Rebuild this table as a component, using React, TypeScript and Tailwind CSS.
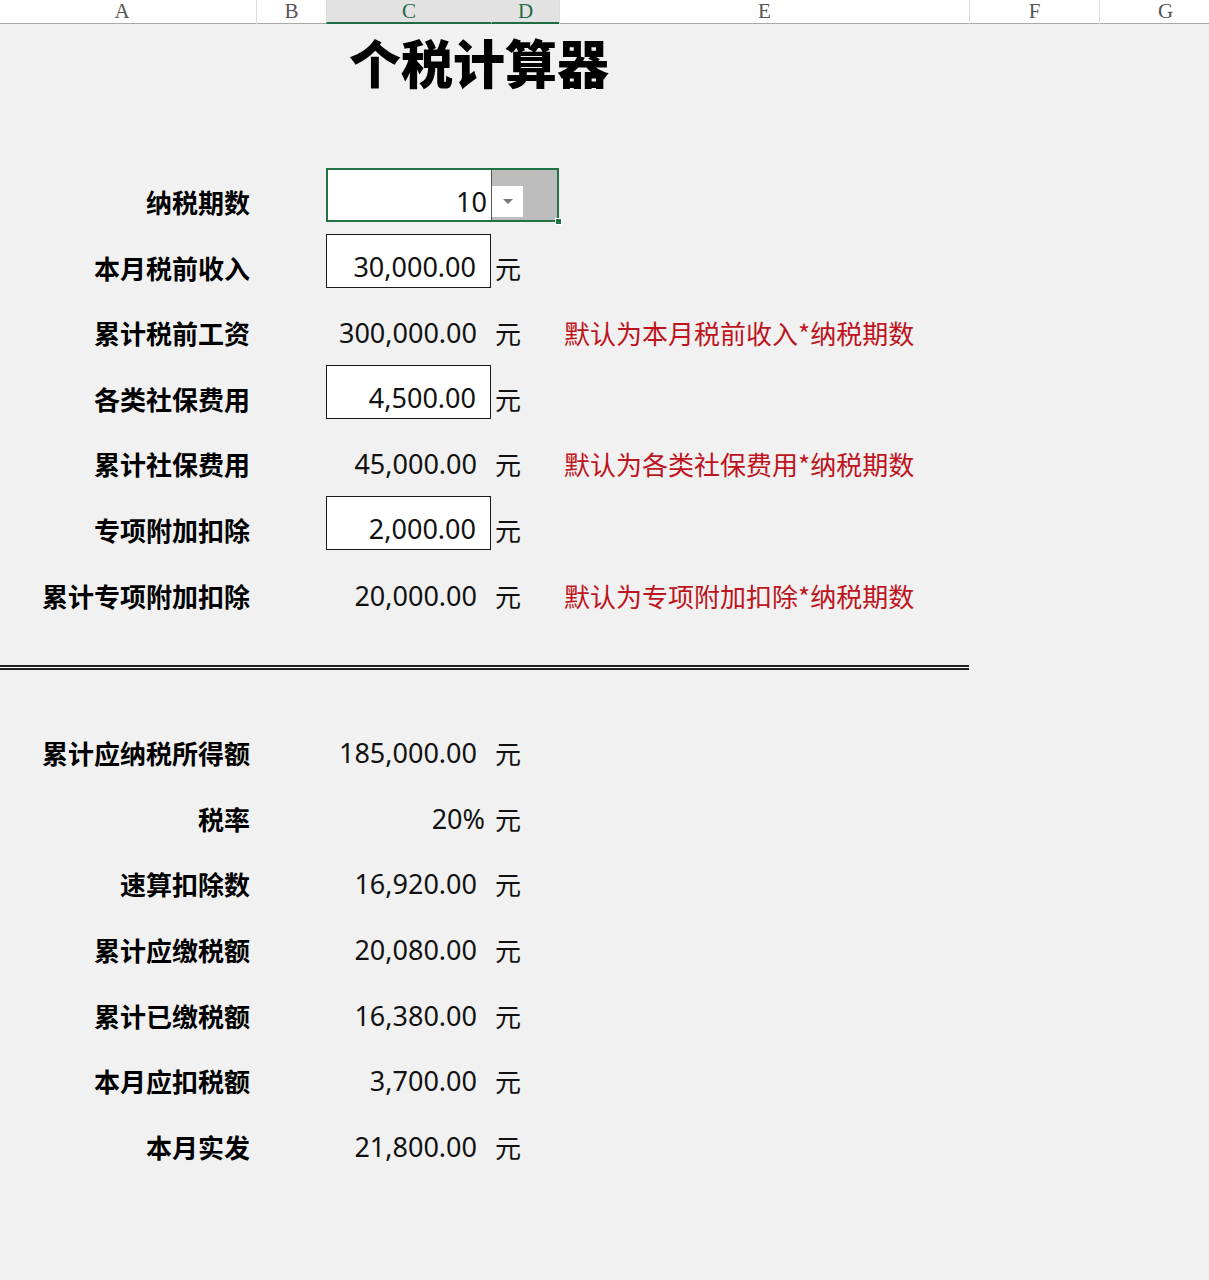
const cols = "grid grid-cols-[256px_70px_165px_68px_410px_130px_132px]";
const num = { fontFamily: '"Noto Sans", "Noto Sans CJK SC", sans-serif' };

type RowProps = {
  label: string;
  value: string;
  boxed?: boolean;
  note?: string;
  pct?: boolean;
};

function Row({ label, value, boxed, note, pct }: RowProps) {
  return (
    <div className={`${cols} h-[65.6px]`}>
      <div className="h-[54px] flex items-end justify-end pr-[6px] pb-[5px]">
        <span className="text-[26px] leading-[30px] font-bold text-black whitespace-nowrap">{label}</span>
      </div>
      <div />
      <div
        className={`h-[54px] flex items-end justify-end pb-[5px] ${pct ? "pr-[6px]" : "pr-[14px]"} ${
          boxed ? "bg-white border border-[#1a1a1a]" : ""
        }`}
      >
        <span className="text-[27px] leading-[30px] text-[#111]" style={num}>
          {value}
        </span>
      </div>
      <div className="h-[54px] flex items-end pl-[4px] pb-[5px]">
        <span className="text-[26px] leading-[30px] text-[#111]">元</span>
      </div>
      <div className="h-[54px] flex items-end pl-[5px] pb-[5px]">
        {note && (
          <span className="text-[26px] leading-[30px] text-[#bd1420] whitespace-nowrap">{note}</span>
        )}
      </div>
    </div>
  );
}

const headers = [
  { l: "A", sel: false },
  { l: "B", sel: false },
  { l: "C", sel: true },
  { l: "D", sel: true },
  { l: "E", sel: false },
  { l: "F", sel: false },
  { l: "G", sel: false },
];

export default function App() {
  return (
    <div
      className="w-[1209px] h-[1280px] bg-[#f1f1f1] overflow-hidden"
      style={{ fontFamily: '"Noto Sans CJK SC", "Noto Sans", sans-serif' }}
    >
      {/* column header */}
      <div className={`${cols} h-[24px] bg-white border-b border-[#a8a8a8]`}>
        {headers.map((h, i) => (
          <div
            key={h.l}
            className={`flex items-start justify-center ${i === 0 ? "pr-[12px]" : ""} ${
              i > 0 ? "border-l border-[#dcdcdc]" : ""
            } ${h.sel ? "bg-[#e2e2e2] text-[#1e6b45] border-b-2 border-b-[#1e6b45]" : "text-[#555]"}`}
            style={{ fontFamily: '"Liberation Serif", serif' }}
          >
            <span className="text-[21px] leading-[22px]">{h.l}</span>
          </div>
        ))}
      </div>

      {/* title */}
      <div className="h-[144px] pl-[349px] pt-[8px]">
        <h1 className="text-[52px] leading-[60px] font-black text-black">个税计算器</h1>
      </div>

      {/* inputs */}
      <div>
        <div className={`${cols} h-[65.6px]`}>
          <div className="h-[54px] flex items-end justify-end pr-[6px] pb-[5px]">
            <span className="text-[26px] leading-[30px] font-bold text-black">纳税期数</span>
          </div>
          <div />
          <div className="col-span-2 h-[54px] relative border-2 border-[#217346] flex">
            <div className="w-[163px] bg-white flex items-end justify-end pr-[4px] pb-[3px]">
              <span className="text-[27px] leading-[30px] text-[#111]" style={num}>
                10
              </span>
            </div>
            <div className="flex-1 bg-[#bdbdbd] border-l border-[#555] pt-[16px]">
              <div className="w-[31px] h-[31px] bg-white flex items-center justify-center">
                <div className="w-0 h-0 border-l-[5px] border-r-[5px] border-t-[5px] border-l-transparent border-r-transparent border-t-[#777]" />
              </div>
            </div>
            <div className="absolute right-[-5px] bottom-[-5px] w-[7px] h-[7px] bg-[#217346] border border-white" />
          </div>
        </div>
        <Row label="本月税前收入" value="30,000.00" boxed />
        <Row label="累计税前工资" value="300,000.00" note="默认为本月税前收入*纳税期数" />
        <Row label="各类社保费用" value="4,500.00" boxed />
        <Row label="累计社保费用" value="45,000.00" note="默认为各类社保费用*纳税期数" />
        <Row label="专项附加扣除" value="2,000.00" boxed />
        <Row label="累计专项附加扣除" value="20,000.00" note="默认为专项附加扣除*纳税期数" />
      </div>

      {/* double rule */}
      <div className="mt-[38px] w-[969px] h-[5px] border-t-2 border-b-2 border-[#222] bg-white" />

      {/* results */}
      <div className="mt-[49px]">
        <Row label="累计应纳税所得额" value="185,000.00" />
        <Row label="税率" value="20%" pct />
        <Row label="速算扣除数" value="16,920.00" />
        <Row label="累计应缴税额" value="20,080.00" />
        <Row label="累计已缴税额" value="16,380.00" />
        <Row label="本月应扣税额" value="3,700.00" />
        <Row label="本月实发" value="21,800.00" />
      </div>
    </div>
  );
}
